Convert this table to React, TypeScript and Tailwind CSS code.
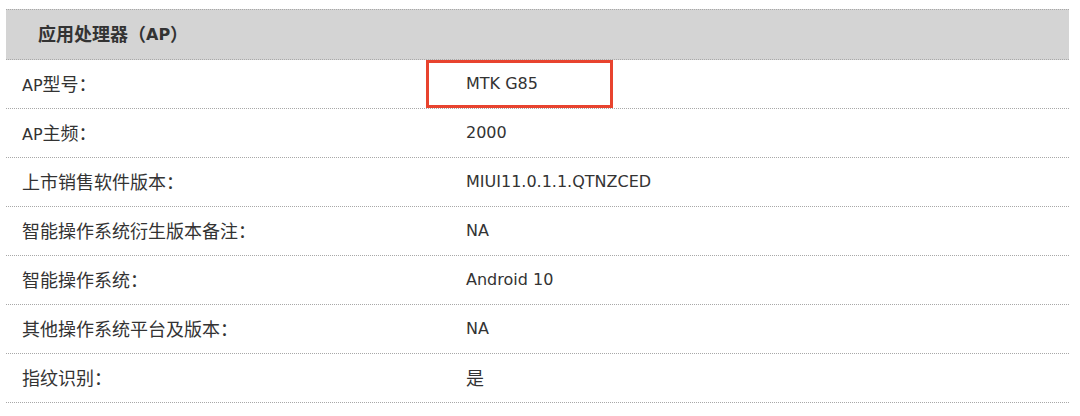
const rows: [string, string][] = [
  ["AP型号：", "MTK G85"],
  ["AP主频：", "2000"],
  ["上市销售软件版本：", "MIUI11.0.1.1.QTNZCED"],
  ["智能操作系统衍生版本备注：", "NA"],
  ["智能操作系统：", "Android 10"],
  ["其他操作系统平台及版本：", "NA"],
  ["指纹识别：", "是"],
]

// CJK glyphs sit a bit larger than the latin text in the original
function Txt({ s }: { s: string }) {
  const parts = s.split(/([\u3000-\u9fff\uff00-\uffef]+)/).filter(Boolean)
  return (
    <>
      {parts.map((p, i) =>
        /[\u3000-\u9fff\uff00-\uffef]/.test(p) ? (
          <span key={i} className="text-[18px]">{p}</span>
        ) : (
          <span key={i}>{p}</span>
        )
      )}
    </>
  )
}

export default function App() {
  return (
    <div
      className="w-[1080px] h-[416px] bg-white pt-[9px] pl-[6px] overflow-hidden text-[#333333]"
      style={{ fontFamily: '"DejaVu Sans", "Noto Sans CJK SC", sans-serif' }}
    >
      <div className="w-[1063px]">
        <div className="h-[51px] bg-[#d4d4d4] border-y border-dotted border-[#a8a8a8] flex items-center pl-8 text-[16px] font-bold">
          <Txt s="应用处理器（AP）" />
        </div>
        {rows.map(([label, value], i) => (
          <div key={label} className="h-[49px] flex items-center border-b border-dotted border-[#a8a8a8] text-[16px]">
            <div className="w-[444px] pl-4 shrink-0">
              <Txt s={label} />
            </div>
            <div className="flex-1 pl-4 h-full flex items-center">
              {i === 0 ? (
                <div className="w-[187px] h-[48px] -ml-[40px] pl-[37px] border-[3px] border-[#e8432e] flex items-center">
                  {value}
                </div>
              ) : (
                <Txt s={value} />
              )}
            </div>
          </div>
        ))}
      </div>
    </div>
  )
}
